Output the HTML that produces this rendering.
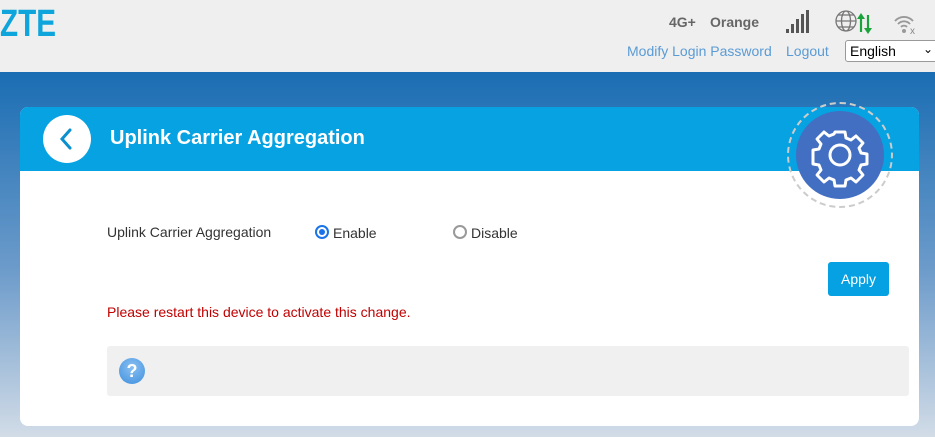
<!DOCTYPE html><html><head><style>
*{margin:0;padding:0;box-sizing:border-box}
body{width:935px;height:437px;overflow:hidden;font-family:"Liberation Sans",Arial,sans-serif;background:#f0f0f0;position:relative}
.top{height:72px;background:#efefef;position:relative}
.logo{position:absolute;left:0;top:3px;font-size:38px;color:#0ea4dc;transform:scaleX(0.78);transform-origin:left;font-weight:bold}
.st{position:absolute;top:14px;font-size:14px;font-weight:bold;color:#666}
.lnk{position:absolute;top:43px;font-size:14px;color:#5a9bd5}
.sel{position:absolute;left:845px;top:40px;width:95px;height:22px;border:1px solid #999;border-radius:3px;background:#fff;font-size:14px;padding:2px 4px;color:#000}
.bg{position:absolute;top:72px;left:0;width:935px;height:365px;background:linear-gradient(#1a6db3,#6e9ccb 55%,#d2dce7)}
.card{position:absolute;left:20px;top:107px;width:899px;height:319px;background:#fff;border-radius:8px;overflow:hidden}
.hd{height:64px;background:#06a2e2;position:relative}
.back{position:absolute;left:23px;top:8px;width:48px;height:48px;border-radius:50%;background:#fff}
.ttl{position:absolute;left:90px;top:20px;color:#fff;font-size:20px;font-weight:bold}
.gear{position:absolute;left:787px;top:102px;width:106px;height:106px;border-radius:50%;border:2px dashed #ccc}
.gi{position:absolute;left:7px;top:7px;width:88px;height:88px;border-radius:50%;background:#426fc2}
.lbl{position:absolute;font-size:14px;color:#333}
.radio{position:absolute;top:225px;width:14px;height:14px;border-radius:50%}
.apply{position:absolute;left:828px;top:262px;width:61px;height:34px;background:#05a1e2;color:#fff;font-size:14px;text-align:center;line-height:34px;border-radius:3px}
.help{position:absolute;left:107px;top:346px;width:802px;height:50px;background:#f0f0f0;border-radius:3px}
.q{position:absolute;left:12px;top:12px;width:26px;height:26px;border-radius:50%;background:radial-gradient(circle at 50% 35%,#8ac0f2,#3e8fdd);color:#fff;font-weight:bold;font-size:18px;text-align:center;line-height:26px}
</style></head><body>
<div class="top">
<div class="logo">ZTE</div>
<div class="st" style="left:669px">4G+</div>
<div class="st" style="left:710px">Orange</div>
<svg style="position:absolute;left:785px;top:10px" width="26" height="24"><g fill="#555"><rect x="1" y="19" width="3" height="4"/><rect x="6" y="14" width="3" height="9"/><rect x="11" y="9" width="3" height="14"/><rect x="16" y="4" width="3" height="19"/><rect x="21" y="0" width="3" height="23"/></g></svg>
<svg style="position:absolute;left:835px;top:10px" width="42" height="26"><g fill="none" stroke="#777" stroke-width="1.3"><circle cx="11" cy="11" r="10"/><ellipse cx="11" cy="11" rx="4.5" ry="10"/><line x1="1" y1="11" x2="21" y2="11"/><line x1="3" y1="5" x2="19" y2="5"/><line x1="3" y1="17" x2="19" y2="17"/></g><g stroke="#1aa33a" stroke-width="2.2" fill="#1aa33a"><line x1="26" y1="7" x2="26" y2="22"/><path d="M22 9 L26 3 L30 9Z" stroke="none"/><line x1="33" y1="5" x2="33" y2="20"/><path d="M29 18 L33 24 L37 18Z" stroke="none"/></g></svg>
<svg style="position:absolute;left:893px;top:13px" width="28" height="22"><g fill="none" stroke="#999" stroke-width="1.8"><path d="M2 8 A12 12 0 0 1 20 8"/><path d="M5 11 A8 8 0 0 1 17 11"/><path d="M8 14 A4 4 0 0 1 14 14"/></g><circle cx="11" cy="18" r="2" fill="#999"/><text x="17" y="21" font-size="10" fill="#888" font-family="Liberation Sans">x</text></svg>
<div class="lnk" style="left:627px">Modify Login Password</div>
<div class="lnk" style="left:786px">Logout</div>
<div class="sel">English <span style="position:absolute;left:77px;top:1px;font-size:12px">&#8964;</span></div>
</div>
<div class="bg"></div>
<div class="card">
<div class="hd"><div class="back"><svg width="48" height="48"><path d="M27 15 L19 24 L27 33" fill="none" stroke="#0a8fd0" stroke-width="3" stroke-linecap="round"/></svg></div><div class="ttl">Uplink Carrier Aggregation</div></div>
</div>
<div class="gear"><div class="gi"><svg width="88" height="88" viewBox="0 0 88 88"><g fill="none" stroke="#fff" stroke-width="3" stroke-linejoin="round"><path d="M39 21h10l1 6 5 2 5-4 7 7-4 5 2 5 6 1v10l-6 1-2 5 4 5-7 7-5-4-5 2-1 6H39l-1-6-5-2-5 4-7-7 4-5-2-5-6-1V39l6-1 2-5-4-5 7-7 5 4 5-2z"/><circle cx="44" cy="44" r="10"/></g></svg></div></div>
<div class="lbl" style="left:107px;top:224px">Uplink Carrier Aggregation</div>
<div class="radio" style="left:315px;border:2px solid #1a73e8"><div style="width:6px;height:6px;margin:2px;border-radius:50%;background:#1a73e8"></div></div>
<div class="lbl" style="left:333px;top:225px">Enable</div>
<div class="radio" style="left:453px;border:2px solid #999"></div>
<div class="lbl" style="left:471px;top:225px">Disable</div>
<div class="apply">Apply</div>
<div class="lbl" style="left:107px;top:304px;color:#c00000">Please restart this device to activate this change.</div>
<div class="help"><div class="q">?</div></div>
</body></html>
